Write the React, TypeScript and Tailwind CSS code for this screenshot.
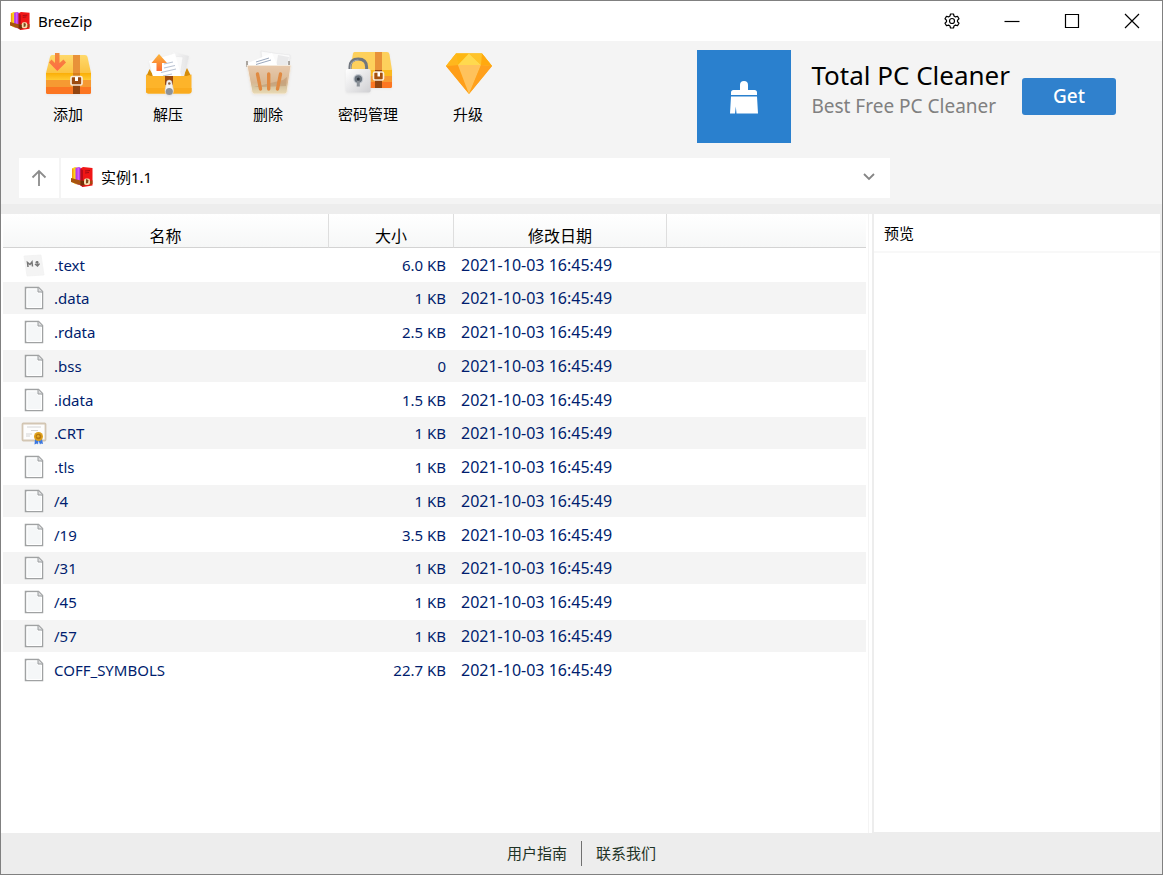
import type { ReactNode } from "react";

const entries = [
  { name: ".text", size: "6.0 KB", icon: "markdown" },
  { name: ".data", size: "1 KB", icon: "file" },
  { name: ".rdata", size: "2.5 KB", icon: "file" },
  { name: ".bss", size: "0", icon: "file" },
  { name: ".idata", size: "1.5 KB", icon: "file" },
  { name: ".CRT", size: "1 KB", icon: "certificate" },
  { name: ".tls", size: "1 KB", icon: "file" },
  { name: "/4", size: "1 KB", icon: "file" },
  { name: "/19", size: "3.5 KB", icon: "file" },
  { name: "/31", size: "1 KB", icon: "file" },
  { name: "/45", size: "1 KB", icon: "file" },
  { name: "/57", size: "1 KB", icon: "file" },
  { name: "COFF_SYMBOLS", size: "22.7 KB", icon: "file" },
];

const modified = "2021-10-03 16:45:49";

function AppLogo({ className }: { className: string }) {
  return (
    <svg viewBox="0 0 22 22" className={className} aria-hidden="true">
      <path d="M1 2.500 4 1l4 1v17l-4-1-3-2z" fill="#fbd51c" />
      <path d="M1 2.500 2.500 3v13.500l-1.500-1z" fill="#f59b14" />
      <path d="M4.500 2 8 1l3 1.500v17l-3-.5-3.500-1.500z" fill="#b13df0" />
      <path d="M6.500 2 8 1.500V18H6.500z" fill="#d75bf5" />
      <path d="M9.500 2.500 12 1l9.500 1v17.500L12 21l-2.500-1.500z" fill="#f01616" />
      <path d="M9.500 3 12 4v17l-2.500-1.500z" fill="#b90c18" />
      <path d="m14 5 5-.5M14 7l4-.5" stroke="#a60b12" />
      <path d="m0 12 9.500 2.500 4 .5v4.500l-4.500-.5-9-3z" fill="#a8530f" />
      <path d="m9.500 14.500 4 .5v4.500l-4-.5z" fill="#743008" />
      <path d="m18.500 15 3-.8v3.800l-3 .8z" fill="#a8430f" />
      <rect x="13" y="12.500" width="6" height="6.500" rx="2" fill="#f6dfb0" />
      <path d="m15 13 2.500 1-.5 3-2 .5z" fill="#7d4a1c" />
    </svg>
  );
}

function ChestIcon() {
  return (
    <svg viewBox="0 0 48 48" className="size-12 drop-shadow-xs" aria-hidden="true">
      <defs>
        <linearGradient id="lid" x1="0" y1="0" x2="0" y2="1">
          <stop offset="0" stopColor="#ffd96b" />
          <stop offset="1" stopColor="#fbc343" />
        </linearGradient>
        <linearGradient id="rim" x1="0" y1="0" x2="0" y2="1">
          <stop offset="0" stopColor="#fbae06" />
          <stop offset="1" stopColor="#ffcb33" />
        </linearGradient>
        <linearGradient id="down" x1="0" y1="0" x2="0" y2="1">
          <stop offset="0" stopColor="#f18c3c" />
          <stop offset="1" stopColor="#ff6b45" />
        </linearGradient>
      </defs>
      <path d="M8 5h33q2 0 2.500 2L47 23H2L6 7q.5-2 2-2z" fill="url(#lid)" />
      <path d="M2 23h45v7H2z" fill="url(#rim)" />
      <path d="M2 30h45v7H2z" fill="#f69a32" />
      <path d="M2 37h45v5.500q0 1.500-1.500 1.500h-42Q2 44 2 42.500z" fill="#fc7622" />
      <path d="M29 5h7v18h-7z" fill="#e89239" />
      <path d="M29 23h7v7h-7z" fill="#d77f1b" />
      <path d="M29 30h7v14h-7z" fill="#924510" />
      <rect x="27" y="26.500" width="11" height="8.500" rx="1.500" fill="#9c4b10" stroke="#f8ead9" strokeWidth="1.700" />
      <path d="M31 27v4h3v-4" fill="#fff" />
      <path d="M11 3h4.500v10l4-3.500 2.500 3L13.300 21 5 12.500l2.500-3 3.500 3.500z" fill="url(#down)" />
    </svg>
  );
}

function ExtractIcon() {
  return (
    <svg viewBox="0 0 48 48" className="size-12 drop-shadow-xs" aria-hidden="true">
      <defs>
        <linearGradient id="up" x1="0" y1="0" x2="0" y2="1">
          <stop offset="0" stopColor="#fbb63b" />
          <stop offset="1" stopColor="#fc6b34" />
        </linearGradient>
        <linearGradient id="paperBack" x1="0" y1="0" x2="1" y2="0">
          <stop offset="0" stopColor="#fff" />
          <stop offset="1" stopColor="#e4e4e5" />
        </linearGradient>
      </defs>
      <path d="m5.500 19-3 7h7zM43 18l4 8h-8z" fill="#d58c08" />
      <path d="m29 2 16 4-5 21H22z" fill="url(#paperBack)" />
      <path d="m29 6 10 1-3 20H26z" fill="#fafafa" stroke="#e5e5e7" strokeWidth=".6" />
      <path d="M5 11 31 3.500 37.500 27H9z" fill="#fff" />
      <path d="m20 14 9-2m-9 6 11-2.500m-14 7 15-3.500m-13 7 9-2" stroke="#bac3d2" strokeWidth="1.100" />
      <path d="M2 24.500 7 26h35.500l5-1.500V41q0 2.500-2.500 2.500H4.500Q2 43.500 2 41z" fill="#fdb42a" />
      <path d="M2 38h45.500v3q0 2.500-2.500 2.500H4.500Q2 43.500 2 41z" fill="#faab1e" />
      <path d="M21 26h8v9h-8z" fill="#9a4a10" />
      <path d="M23 31q2.200-2 4.500 0l2 9q0 5.500-4.200 5.500T21 40z" fill="#f3f3f4" stroke="#d8d8db" strokeWidth=".5" />
      <circle cx="25.300" cy="33.500" r="1.300" fill="#90623c" />
      <circle cx="25.300" cy="41.500" r="3.600" fill="#8d9299" />
      <path d="m15 4 8 9h-5v8h-5.500v-8h-5z" fill="url(#up)" />
    </svg>
  );
}

function BasketIcon() {
  return (
    <svg viewBox="0 0 48 48" className="size-12 drop-shadow-xs" aria-hidden="true">
      <defs>
        <linearGradient id="basket" x1="0" y1="0" x2="0" y2="1">
          <stop offset="0" stopColor="#e8c9ac" />
          <stop offset=".6" stopColor="#d9b893" />
          <stop offset=".75" stopColor="#d6c4a0" />
          <stop offset="1" stopColor="#ebdcb6" />
        </linearGradient>
      </defs>
      <path d="m17 1 12 2 17 2-1 12H19z" fill="#fbfbfb" stroke="#e4e4e5" strokeWidth=".6" />
      <path d="m34 5 11 2-2 10H32z" fill="#eaeaeb" />
      <path d="M3 11v6m42-6v6" stroke="#62584d" />
      <path d="M4 13 28 3l6 14H5z" fill="#fff" />
      <path d="m12 12 13-4M12 14.500 27 10" stroke="#9da9bd" />
      <path d="M3 15.500h44l-4 26.500q-.4 2-2.500 2h-30Q8.400 44 8 42z" fill="url(#basket)" stroke="#f4eadd" />
      <path d="m10 37 29-7 4-3-1 9-26 1z" fill="#a87f55" opacity=".35" />
      <path d="m13.500 24 3 15m8.200-15v15m11.800-15-3 15" stroke="#e08a42" strokeWidth="3.400" strokeLinecap="round" />
    </svg>
  );
}

function LockedChestIcon() {
  return (
    <svg viewBox="0 0 48 48" className="size-12 drop-shadow-xs" aria-hidden="true">
      <defs>
        <linearGradient id="lockBody" x1="0" y1="0" x2="1" y2="1">
          <stop offset="0" stopColor="#fff" />
          <stop offset="1" stopColor="#cfcfd2" />
        </linearGradient>
      </defs>
      <path d="M10.500 2H43q2 0 2.400 2L48 20H6L9 3.500Q9.300 2 10.500 2z" fill="#fdd05c" />
      <path d="M6 20h42v6H6z" fill="#fbb91f" />
      <path d="M6 26h42v6H6z" fill="#f69a32" />
      <path d="M6 32h42v4.500q0 1.500-1.500 1.500H6z" fill="#fc7622" />
      <path d="M31 2h7v18h-7z" fill="#e89239" />
      <path d="M31 20h7v18h-7z" fill="#924510" />
      <rect x="29.500" y="22" width="10" height="8" rx="1.500" fill="#a5500f" stroke="#faedd9" strokeWidth="1.600" />
      <path d="M33.500 22v4.500H36V22" fill="#fff" />
      <path d="M6 20v-3q0-8 8.300-8t8.300 8v3" fill="none" stroke="#70767e" strokeWidth="3" />
      <path d="M6.500 20v-3q0-6.500 7.800-7" fill="none" stroke="#a6abb1" />
      <rect x="1.700" y="19" width="25" height="23.500" rx="2" fill="url(#lockBody)" />
      <circle cx="14.300" cy="29" r="5" fill="#c5cad0" />
      <circle cx="14.300" cy="29" r="3.800" fill="#6b747e" />
      <circle cx="14.300" cy="29" r="1.500" fill="#30373f" />
      <path d="m13 31-.3 5.500h3.200l-.3-5.500z" fill="#8a9097" />
    </svg>
  );
}

function DiamondIcon() {
  return (
    <svg viewBox="0 0 48 48" className="size-12" aria-hidden="true">
      <path d="M12 3.500h26L48 16 25 44 2 16z" fill="#fdb31e" />
      <path d="M12 3.500h26L48 16H2z" fill="#fec32a" />
      <path d="M12 3.500 14 15 2 16z" fill="#ffb71d" />
      <path d="M12 3.500h13L14 15z" fill="#fdb713" />
      <path d="M25 3.500 37 15H14z" fill="#ffd94e" />
      <path d="M25 3.500h13L37 15z" fill="#fec32a" />
      <path d="M38 3.500 48 16l-11-1z" fill="#ffa90f" />
      <path d="M2 16 14 15l11 29z" fill="#ff9e18" />
      <path d="M14 15h23L25 44z" fill="#ffc25c" />
      <path d="m37 15 11 1-23 28z" fill="#ffa01d" />
    </svg>
  );
}

function FileIcon() {
  return (
    <svg viewBox="0 0 26 26" className="size-[26px]" aria-hidden="true">
      <path d="M4.500 2.500h13l4 4v17h-17z" fill="#f8f9f9" stroke="#a0a2a3" strokeWidth="1.500" />
      <path d="M6 4h11v4h3.500v14.500H6z" fill="#f5f7f8" stroke="#fff" />
      <path d="M17 2.500v4.500h4.500" fill="#dedfe0" stroke="#999c9e" />
    </svg>
  );
}

function MarkdownIcon() {
  return (
    <svg viewBox="0 0 26 26" className="size-[26px]" aria-hidden="true">
      <path d="m3 4 17-1 3 20-17 1z" fill="#f4f4f4" stroke="#f0f0f0" strokeWidth=".7" />
      <path d="m7 15-.5-4.500 2.500 2 2-2.500.5 4.500M16 9l.5 5m-2.500-2 2.500 2 2-2.500m-4-1 3-.3" fill="none" stroke="#777" strokeWidth="1.500" />
    </svg>
  );
}

function CertificateIcon() {
  return (
    <svg viewBox="0 0 26 26" className="size-[26px]" aria-hidden="true">
      <rect x="1.500" y="3.500" width="23" height="17" rx=".8" fill="#fdfdfd" stroke="#d3c6b3" strokeWidth="1.800" />
      <path d="M6 7h14M10 10.500h7M5 14h6m-6 2h4" stroke="#d4d4d4" />
      <path d="m14 19-.5 5.500 2.500-1 1 1 .5-4 1.500 4 1-1 2 .5-1-5z" fill="#3c78e0" />
      <circle cx="17.500" cy="16.500" r="4.500" fill="#dfa11b" />
      <circle cx="17.500" cy="16.500" r="2.800" fill="#b87910" />
      <circle cx="17.200" cy="16.200" r="1.300" fill="#e5ab2a" />
    </svg>
  );
}

function EntryIcon({ kind }: { kind: string }) {
  if (kind === "markdown") return <MarkdownIcon />;
  if (kind === "certificate") return <CertificateIcon />;
  return <FileIcon />;
}

function ToolButton({ label, children }: { label: string; children: ReactNode }) {
  return (
    <button type="button" className="flex w-[100px] flex-col items-center gap-1 text-[15px] leading-6">
      {children}
      <span>{label}</span>
    </button>
  );
}

function WindowButton({ label, children }: { label: string; children: ReactNode }) {
  return (
    <button type="button" aria-label={label} className="flex h-10 w-[60px] items-center justify-center">
      <svg viewBox="0 0 16 16" className="size-4" fill="none" stroke="#000" strokeWidth="1.200" aria-hidden="true">
        {children}
      </svg>
    </button>
  );
}

function TitleBar() {
  return (
    <header className="flex h-10 shrink-0 items-center bg-white">
      <AppLogo className="ml-[9px] size-5" />
      <h1 className="ml-2 flex-1 text-[15px]">BreeZip</h1>
      <WindowButton label="设置">
        <path d="M6.500 1h3l.5 2 1.500.9 2-.6 1.500 2.600L13.500 7.200v1.600L15 10.100l-1.500 2.600-2-.6-1.500.9-.5 2h-3L6 13l-1.500-.9-2 .6L1 10.100l1.500-1.300V7.200L1 5.900l1.500-2.600 2 .6L6 3z" strokeLinejoin="round" />
        <circle cx="8" cy="8" r="2.500" />
      </WindowButton>
      <WindowButton label="最小化">
        <path d="M.5 8.500h15" />
      </WindowButton>
      <WindowButton label="最大化">
        <path d="M1.500 1.500h13v13h-13z" />
      </WindowButton>
      <WindowButton label="关闭">
        <path d="m1 1 14 14M15 1 1 15" />
      </WindowButton>
    </header>
  );
}

function Promotion() {
  return (
    <aside className="mr-[46px] flex items-start">
      <div className="flex h-[93px] w-[94px] items-center justify-center bg-[#2a80ce]">
        <svg viewBox="0 0 28 34" className="h-[34px] w-7" fill="#fff" aria-hidden="true">
          <path d="M1 15v-2.500Q1 10 3.500 10H10V5q0-4 4-4t4 4v5h6.500q2.500 0 2.500 2.500V15z" />
          <path d="M1 16.500h26l1 17H6.500l-.7-7-.8 7H0z" />
        </svg>
      </div>
      <div className="ml-5 pt-2">
        <p className="text-[26px] leading-[34px]">Total PC Cleaner</p>
        <p className="text-[19px] leading-7 text-[#808080]">Best Free PC Cleaner</p>
      </div>
      <button type="button" className="mt-7 ml-3 h-[37px] w-[94px] rounded-[3px] bg-[#3081cd] text-[19px] font-medium text-white">
        Get
      </button>
    </aside>
  );
}

function AddressBar() {
  return (
    <div className="mr-[272px] ml-[18px] flex h-10 gap-[2px]">
      <button type="button" aria-label="向上" className="flex w-10 items-center justify-center bg-white">
        <svg viewBox="0 0 16 18" className="h-[18px] w-4" fill="none" stroke="#8c8c8c" strokeWidth="1.800" aria-hidden="true">
          <path d="M8 17V2M1.500 8.500 8 2l6.500 6.500" />
        </svg>
      </button>
      <label className="flex flex-1 items-center bg-white pr-[15px] pb-[2px] pl-[10px]">
        <AppLogo className="size-[22px]" />
        <select aria-label="位置" className="ml-2 flex-1 appearance-none bg-transparent text-[15px] outline-none">
          <option>实例1.1</option>
        </select>
        <svg viewBox="0 0 12 8" className="h-2 w-3" fill="none" stroke="#858585" strokeWidth="1.800" aria-hidden="true">
          <path d="m1 1 5 5 5-5" />
        </svg>
      </label>
    </div>
  );
}

const headCell = "border-b border-[#d3d3d3] bg-linear-to-b from-white to-[#f6f7f7] p-0 pt-[11px] text-[16px] leading-[22px] font-normal";

function FileTable() {
  return (
    <table className="w-full table-fixed border-separate border-spacing-0 text-[#001d6e]">
      <colgroup>
        <col className="w-[326px]" />
        <col className="w-[125px]" />
        <col className="w-[213px]" />
        <col />
      </colgroup>
      <thead className="text-black">
        <tr className="h-[34px]">
          <th className={`${headCell} border-r border-r-[#dedede]`}>名称</th>
          <th className={`${headCell} border-r border-r-[#dedede]`}>大小</th>
          <th className={`${headCell} border-r border-r-[#dedede]`}>修改日期</th>
          <th className={headCell} aria-label="其他" />
        </tr>
      </thead>
      <tbody className="text-[15px] leading-6">
        {entries.map((entry) => (
          <tr
            key={entry.name}
            className="h-[34px] nth-[4n+1]:h-[33px] even:*:bg-[#f4f4f4] *:border-y *:border-transparent *:bg-clip-padding *:p-0"
          >
            <td>
              <div className="-my-1 flex items-center gap-[7px] pl-[18px]">
                <EntryIcon kind={entry.icon} />
                {entry.name}
              </div>
            </td>
            <td>
              <div className="pr-2 text-right">{entry.size}</div>
            </td>
            <td>
              <div className="pl-[7px] text-[16px]">{modified}</div>
            </td>
            <td />
          </tr>
        ))}
      </tbody>
    </table>
  );
}

export default function App() {
  return (
    <div className="flex min-h-screen flex-col border border-[#808080] bg-white font-['Noto_Sans','Noto_Sans_CJK_SC',sans-serif] text-black">
      <TitleBar />
      <div className="bg-[#f4f4f4] pb-[6px]">
        <div className="flex min-h-[117px] items-start justify-between pt-[9px] pl-[17px]">
          <nav className="flex" aria-label="工具栏">
            <ToolButton label="添加"><ChestIcon /></ToolButton>
            <ToolButton label="解压"><ExtractIcon /></ToolButton>
            <ToolButton label="删除"><BasketIcon /></ToolButton>
            <ToolButton label="密码管理"><LockedChestIcon /></ToolButton>
            <ToolButton label="升级"><DiamondIcon /></ToolButton>
          </nav>
          <Promotion />
        </div>
        <AddressBar />
      </div>
      <main className="flex flex-1 border-t-10 border-[#ededed]">
        <section className="flex-1 border-r border-[#f4f4f4] pr-[2px] pl-[2px]">
          <FileTable />
        </section>
        <aside className="ml-[3px] w-[290px] border-r-2 border-b border-l-2 border-[#ededed]">
          <h2 className="border-b-2 border-[#f8f8f8] pt-[7px] pb-[6px] pl-[10px] text-[15px] leading-6">预览</h2>
        </aside>
      </main>
      <footer className="flex h-[41px] shrink-0 items-center justify-center bg-[#ededed] text-[15px] text-[#1f3326]">
        <a href="#guide" className="px-[14px]">用户指南</a>
        <span className="h-[25px] w-px bg-[#707070]" />
        <a href="#contact" className="px-[14px]">联系我们</a>
      </footer>
    </div>
  );
}
